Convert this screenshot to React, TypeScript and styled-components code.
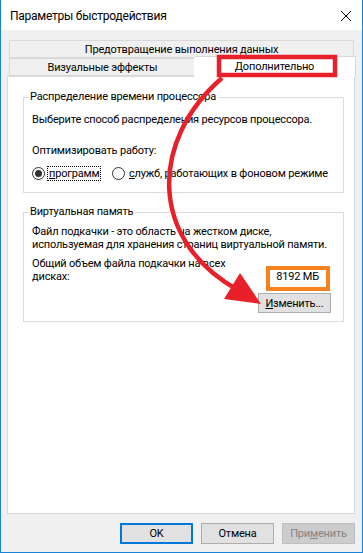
import React from "react";
import styled, { createGlobalStyle } from "styled-components";

const GlobalStyle = createGlobalStyle`
  html, body { margin: 0; padding: 0; background: #ffffff; }
  * { box-sizing: border-box; }
  body { font-family: Roboto, "Liberation Sans", sans-serif; font-size: 11px; letter-spacing: -0.18px; color: #000; }
`;

const Window = styled.div`
  position: relative;
  width: 363px;
  height: 553px;
  display: flex;
  flex-direction: column;
  border: 1px solid #1883d7;
  border-top: none;
  background: #f0f0f0;
`;

const TitleBar = styled.div`
  height: 30px;
  background: #ffffff;
  display: flex;
  align-items: center;
  justify-content: space-between;
  padding: 2px 10px 0 9px;
  font-size: 12px;
  letter-spacing: -0.25px;
`;

const CloseIcon = styled.svg`
  width: 12px;
  height: 12px;
`;

const Body = styled.div`
  flex: 1;
  display: flex;
  flex-direction: column;
  padding: 10px 7px 8px 6px;
`;

const Tabs = styled.div`
  display: flex;
  flex-direction: column;
  padding: 0 1px 0 2px;
`;

const TabRow = styled.div`
  display: flex;
  height: 18px;
  align-items: flex-end;
`;

const Tab = styled.div<{ $active?: boolean; $w?: number }>`
  flex: ${(p) => (p.$w ? `0 0 ${p.$w}px` : "1")};
  height: ${(p) => (p.$active ? "21px" : "18px")};
  margin: ${(p) => (p.$active ? "0 -2px -1px -2px" : "0")};
  background: ${(p) => (p.$active ? "#ffffff" : "#f0f0f0")};
  border: 1px solid #d9d9d9;
  border-bottom: ${(p) => (p.$active ? "none" : "1px solid #d9d9d9")};
  display: flex;
  align-items: center;
  justify-content: center;
  padding-bottom: ${(p) => (p.$active ? "2px" : "0")};
  position: relative;
  z-index: ${(p) => (p.$active ? 2 : 1)};
  & + & { border-left: none; }
`;

const Panel = styled.div`
  flex: 1;
  background: #ffffff;
  border: 1px solid #d9d9d9;
  padding: 13px 10px 0 15px;
  display: flex;
  flex-direction: column;
  gap: 12px;
`;

const Group = styled.fieldset`
  margin: 0;
  border: 1px solid #dcdcdc;
  padding: 0 12px 0 8px;
  min-width: 0;
`;

const Legend = styled.legend`
  margin-left: -4px;
  padding: 0 2px;
  line-height: 14px;
`;

const Line = styled.div<{ $mt?: number }>`
  line-height: 13px;
  margin-top: ${(p) => p.$mt ?? 0}px;
  white-space: nowrap;
`;

const RadioRow = styled.div`
  display: flex;
  align-items: center;
  height: 16px;
  margin-top: 8px;
  margin-bottom: 11px;
  white-space: nowrap;
`;

const RadioItem = styled.label<{ $w?: number }>`
  display: flex;
  align-items: center;
  gap: 3px;
  flex: ${(p) => (p.$w ? `0 0 ${p.$w}px` : "1")};
`;

const RadioCircle = styled.span<{ $checked?: boolean }>`
  width: 13px;
  height: 13px;
  border-radius: 50%;
  border: 1px solid #333333;
  background: #ffffff;
  display: flex;
  align-items: center;
  justify-content: center;
  &::after {
    content: "";
    width: 7px;
    height: 7px;
    border-radius: 50%;
    background: ${(p) => (p.$checked ? "#333333" : "transparent")};
  }
`;

const RadioText = styled.span<{ $focus?: boolean }>`
  line-height: 13px;
  padding: 0 1px;
  outline: ${(p) => (p.$focus ? "1px dotted #000" : "none")};
`;

const U = styled.span`
  text-decoration: underline;
`;

const SizeRow = styled.div`
  display: flex;
  justify-content: space-between;
  align-items: flex-end;
  margin-top: 6px;
`;

const SizeLabel = styled.div`
  width: 200px;
  line-height: 13px;
`;

const SizeValue = styled.div`
  line-height: 13px;
  padding-right: 12px;
  white-space: nowrap;
`;

const ButtonLine = styled.div`
  display: flex;
  justify-content: flex-end;
  margin-top: 10px;
  margin-bottom: 8px;
`;

const Button = styled.button<{ $primary?: boolean; $disabled?: boolean }>`
  width: 73px;
  height: 21px;
  font-family: inherit;
  font-size: 11px;
  letter-spacing: inherit;
  padding: 0;
  background: ${(p) => (p.$disabled ? "#cccccc" : "#e1e1e1")};
  color: ${(p) => (p.$disabled ? "#838383" : "#000000")};
  border: ${(p) =>
    p.$primary ? "2px solid #0078d7" : p.$disabled ? "1px solid #bfbfbf" : "1px solid #adadad"};
`;

const SmallButton = styled(Button)`
  height: 20px;
`;

const Footer = styled.div`
  display: flex;
  justify-content: flex-end;
  gap: 8px;
  margin-top: 9px;
`;

const Overlay = styled.svg`
  position: absolute;
  left: -1px;
  top: 0;
  width: 363px;
  height: 553px;
  pointer-events: none;
  z-index: 10;
`;

export default function App() {
  return (
    <>
      <GlobalStyle />
      <Window>
        <TitleBar>
          <span>Параметры быстродействия</span>
          <CloseIcon viewBox="0 0 12 12">
            <path d="M1 1 L11 11 M11 1 L1 11" stroke="#000" strokeWidth="1" fill="none" />
          </CloseIcon>
        </TitleBar>
        <Body>
          <Tabs>
            <TabRow>
              <Tab>Предотвращение выполнения данных</Tab>
            </TabRow>
            <TabRow>
              <Tab $w={187}>Визуальные эффекты</Tab>
              <Tab $active>Дополнительно</Tab>
            </TabRow>
          </Tabs>
          <Panel>
            <Group>
              <Legend>Распределение времени процессора</Legend>
              <Line $mt={9}>Выберите способ распределения ресурсов процессора.</Line>
              <Line $mt={18}>Оптимизировать работу:</Line>
              <RadioRow>
                <RadioItem $w={80}>
                  <RadioCircle $checked />
                  <RadioText $focus>
                    <U>п</U>рограмм
                  </RadioText>
                </RadioItem>
                <RadioItem>
                  <RadioCircle />
                  <RadioText>
                    <U>с</U>лужб, работающих в фоновом режиме
                  </RadioText>
                </RadioItem>
              </RadioRow>
            </Group>
            <Group>
              <Legend>Виртуальная память</Legend>
              <Line $mt={6}>Файл подкачки - это область на жестком диске,</Line>
              <Line>используемая для хранения страниц виртуальной памяти.</Line>
              <SizeRow>
                <SizeLabel>Общий объем файла подкачки на всех дисках:</SizeLabel>
                <SizeValue>8192 МБ</SizeValue>
              </SizeRow>
              <ButtonLine>
                <SmallButton>
                  <U>И</U>зменить...
                </SmallButton>
              </ButtonLine>
            </Group>
          </Panel>
          <Footer>
            <Button $primary>OK</Button>
            <Button>Отмена</Button>
            <Button $disabled>
              При<U>м</U>енить
            </Button>
          </Footer>
        </Body>
        <Overlay viewBox="0 0 363 553">
          <rect x="219" y="57" width="116" height="18" fill="none" stroke="#e8202a" strokeWidth="4.5" />
          <path
            d="M222 78 C150 140 148 240 238 290"
            fill="none"
            stroke="#e8202a"
            strokeWidth="4.5"
          />
          <polygon points="240,273 224,299 261,304" fill="#e8202a" />
          <rect x="268" y="268" width="60" height="21" fill="none" stroke="#f7821e" strokeWidth="4" />
        </Overlay>
      </Window>
    </>
  );
}
